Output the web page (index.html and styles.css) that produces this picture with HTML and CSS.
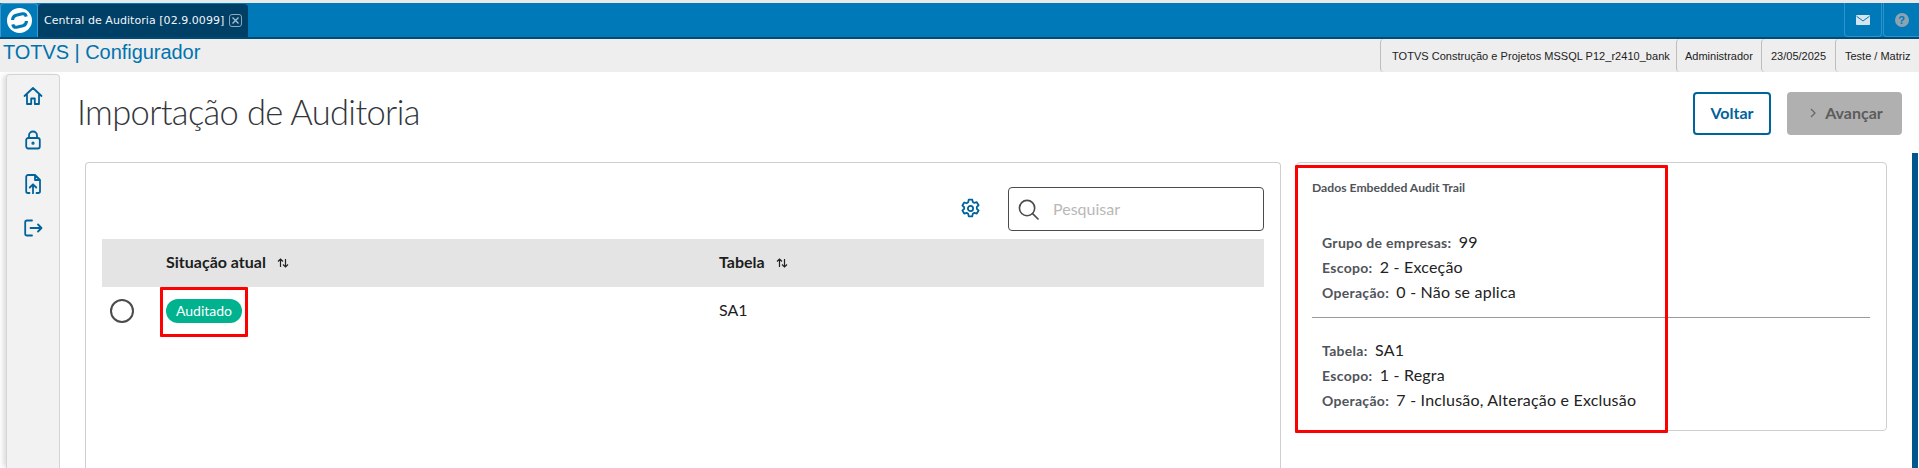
FILE: index.html
```html
<!DOCTYPE html>
<html lang="pt-BR">
<head>
<meta charset="utf-8">
<title>Central de Auditoria</title>
<link rel="stylesheet" href="styles.css">
</head>
<body>
<header class="topbar">
  <div class="logo-box">
    <svg class="logo" viewBox="0 0 26 26"><circle cx="13" cy="13" r="13" fill="#fff"/><path d="M5.800 12.500Q5.800 8.500 9.500 7.500L16 6Q19.300 5.500 20 9M20.200 13.500Q20.200 17.500 16.500 18.500L10 20Q6.700 20.500 6 17" fill="none" stroke="#0079b8" stroke-width="3.200"/></svg>
  </div>
  <div class="tab">
    <span>Central de Auditoria [02.9.0099]</span>
    <svg class="tab-close" viewBox="0 0 13 13"><rect x=".5" y=".5" width="12" height="12" rx="2.500" fill="none" stroke="#8fa9bb"/><path d="M3.500 3.500l6 6M9.500 3.500l-6 6" stroke="#a9bdcb" stroke-width="1.400"/></svg>
  </div>
  <div class="top-actions">
    <div class="top-btn top-mail"><svg viewBox="0 0 14 10" class="mail"><rect width="14" height="10" rx=".8" fill="#d5e5ef"/><path d="M.5 1.200L7 6l6.500-4.800" fill="none" stroke="#0079b8" stroke-width="1"/></svg></div>
    <div class="top-btn top-help"><span>?</span></div>
  </div>
</header>
<div class="infobar">
  <div class="brand">TOTVS | Configurador</div>
  <div class="info-cells">
    <div class="cell cell-a">TOTVS Construção e Projetos MSSQL P12_r2410_bank</div>
    <div class="cell cell-b">Administrador</div>
    <div class="cell cell-c">23/05/2025</div>
    <div class="cell cell-d">Teste / Matriz</div>
  </div>
</div>
<div class="app">
  <nav class="side">
    <svg class="nav-ico" viewBox="0 0 20 20"><path d="M1.500 10L10 2l8.500 8M4 8.500V18h4.200v-5.500h3.600V18H16V8.500" /></svg>
    <svg class="nav-ico" viewBox="0 0 20 20"><rect x="3.200" y="8" width="13.600" height="10.500" rx="2"/><path d="M6 8V5.500a4 4 0 0 1 8 0V8"/><circle cx="10" cy="13.200" r=".7"/></svg>
    <svg class="nav-ico" viewBox="0 0 20 20"><path d="M6.500 19H5a1.800 1.800 0 0 1-1.800-1.800V2.800A1.800 1.800 0 0 1 5 1h7l5 5v11.200a1.800 1.800 0 0 1-1.800 1.800h-1.700M12 1v5h5M10 19.500v-9M6.800 13.500L10 10.300l3.200 3.200"/></svg>
    <svg class="nav-ico" viewBox="0 0 20 20"><path d="M9 2.500H4a1.800 1.800 0 0 0-1.800 1.800v11.400A1.800 1.800 0 0 0 4 17.500h5M7.500 10h11M15 6.500l3.500 3.500-3.500 3.500"/></svg>
  </nav>
  <main class="content">
    <div class="page-head">
      <h1>Importação de Auditoria</h1>
      <div class="actions">
        <button class="btn btn-back">Voltar</button>
        <button class="btn btn-next"><svg class="chev" viewBox="0 0 6 10"><path d="M1 1l4 4-4 4"/></svg>Avançar</button>
      </div>
    </div>
    <div class="columns">
      <section class="panel panel-table">
        <div class="tools">
          <svg class="gear" viewBox="0 0 20 20"><path d="M8.300 1.500h3.400l.5 2.300 1.500.9 2.300-.7 1.700 2.900-1.700 1.600v1.800l1.700 1.600-1.700 2.900-2.300-.7-1.500.9-.5 2.500H8.300l-.5-2.500-1.500-.9-2.300.7-1.700-2.900 1.700-1.600V8.800L2.300 7.200 4 4.300l2.300.7 1.500-.9z"/><circle cx="10" cy="9.900" r="2.500"/></svg>
          <div class="search">
            <svg class="lens" viewBox="0 0 22 22"><circle cx="9.500" cy="9.500" r="8"/><path d="M15.300 15.300L21 21"/></svg>
            <span>Pesquisar</span>
          </div>
        </div>
        <div class="row row-head">
          <div class="c-check"></div>
          <div class="c-status">Situação atual <svg class="sort" viewBox="0 0 12 10"><path d="M3.500 9V1M1 3.500L3.500 1 6 3.500M8.500 1v8M6 6.500L8.500 9 11 6.500"/></svg></div>
          <div class="c-table">Tabela <svg class="sort" viewBox="0 0 12 10"><path d="M3.500 9V1M1 3.500L3.500 1 6 3.500M8.500 1v8M6 6.500L8.500 9 11 6.500"/></svg></div>
        </div>
        <div class="row row-body">
          <div class="c-check"><span class="radio"></span></div>
          <div class="c-status"><span class="badge">Auditado</span></div>
          <div class="c-table">SA1</div>
        </div>
        <div class="mark mark-badge"></div>
      </section>
      <section class="panel panel-data">
        <h2>Dados Embedded Audit Trail</h2>
        <div class="group group-first">
          <p><b>Grupo de empresas:</b> 99</p>
          <p><b>Escopo:</b> 2 - Exceção</p>
          <p><b>Operação:</b> 0 - Não se aplica</p>
        </div>
        <hr>
        <div class="group">
          <p><b>Tabela:</b> SA1</p>
          <p><b>Escopo:</b> 1 - Regra</p>
          <p><b>Operação:</b> 7 - Inclusão, Alteração e Exclusão</p>
        </div>
        <div class="mark mark-data"></div>
      </section>
    </div>
  </main>
</div>
<div class="scroll-thumb"></div>
</body>
</html>
```
FILE: styles.css
```css
* { box-sizing: border-box; }
html, body { margin: 0; height: 468px; overflow: hidden; background: #fff; }
body { font-family: "Lato", "Noto Sans", sans-serif; color: #1d1d1f; position: relative; }

.topbar { height: 39px; margin-top: 0; border-top: 3px solid #e9e9e9; border-bottom: 2px solid #024a76; background: #0079b8; display: flex; align-items: flex-end; }
.logo-box { width: 38px; height: 34px; border: 1px solid #3a9ad0; border-bottom: 0; border-radius: 4px 4px 0 0; display: flex; align-items: center; justify-content: center; }
.logo { width: 25px; height: 25px; }
.tab { width: 210px; height: 33px; background: #003f66; border-radius: 4px 4px 0 0; display: flex; align-items: center; padding-left: 6px; gap: 5px; color: #f2f6f9; font: 11px/1 "DejaVu Sans", sans-serif; letter-spacing: .05px; white-space: nowrap; }
.tab-close { width: 13px; height: 13px; flex: none; }
.top-actions { margin-left: auto; display: flex; height: 34px; }
.top-btn { height: 34px; border: 1px solid #2e93cc; border-top: 0; display: flex; align-items: center; justify-content: center; }
.top-mail { width: 38px; border-radius: 0 0 4px 4px; }
.top-help { width: 36px; margin-left: 1px; border-right: 0; border-radius: 0 0 0 4px; }
.mail { width: 14px; height: 10px; }
.top-help span { width: 14px; height: 14px; border-radius: 50%; background: #8ca3b1; color: #0079b8; font: bold 11px/14px "Liberation Sans", sans-serif; text-align: center; }

.infobar { height: 33px; background: #eee; display: flex; justify-content: space-between; }
.brand { font: 20px/26px "Liberation Sans", sans-serif; color: #0073ae; padding-left: 3px; letter-spacing: -.05px; }
.info-cells { display: flex; }
.cell { height: 33px; border-left: 1px solid #bdbdbd; border-radius: 4px 0 0 4px; font: 11px/34px "Liberation Sans", sans-serif; color: #222; padding-left: 9px; white-space: nowrap; }
.cell-a { width: 296px; padding-left: 11px; letter-spacing: .03px; }
.cell-b { width: 85px; padding-left: 8px; }
.cell-c { width: 74px; }
.cell-d { width: 84px; }

.app { display: flex; height: 396px; overflow: hidden; }
.side { width: 54px; margin: 2px 0 0 6px; background: #f2f2f2; border: 1px solid #d4d4d4; border-bottom: 0; border-radius: 4px 4px 0 0; box-shadow: -4px 0 5px -1px #ddd; display: flex; flex-direction: column; align-items: center; padding-top: 11px; gap: 24px; flex: none; }
.nav-ico { width: 20px; height: 20px; fill: none; stroke: #00639c; stroke-width: 1.800; stroke-linejoin: round; stroke-linecap: round; flex: none; }

.content { flex: 1; min-width: 0; padding: 0 17px 0 17px; }
.page-head { height: 90px; display: flex; justify-content: space-between; align-items: flex-start; padding-top: 18px; padding-right: 0; }
h1 { margin: 0; font-weight: 300; font-size: 34.500px; line-height: 44px; letter-spacing: -.65px; color: #33363b; }
.actions { display: flex; gap: 16px; margin-top: 2px; }
.btn { height: 43px; border-radius: 4px; font: bold 16px/1 "Lato", sans-serif; display: flex; align-items: center; justify-content: center; padding: 0 0 2px; }
.btn-back { width: 78px; background: #fff; border: 2px solid #00639c; color: #00639c; }
.btn-next { width: 115px; background: #b0b0b0; border: 0; color: #5c5c5c; gap: 9px; padding-left: 4px; }
.chev { width: 6px; height: 10px; fill: none; stroke: #666; stroke-width: 1.200; }

.columns { display: flex; gap: 15px; padding-left: 8px; padding-right: 14px; }
.panel { border: 1px solid #cfcfcf; border-radius: 4px; position: relative; }
.panel-table { width: 1196px; height: 306px; padding: 24px 16px 0; border-bottom: 0; border-radius: 4px 4px 0 0; }
.panel-data { width: 591px; height: 269px; padding: 16px 16px 0 15px; }
.tools { height: 52px; display: flex; justify-content: flex-end; align-items: flex-start; }
.gear { width: 21px; height: 21px; margin: 11px 27px 0 0; fill: none; stroke: #00639c; stroke-width: 1.700; stroke-linejoin: round; }
.search { width: 256px; height: 44px; border: 1px solid #4b4b4b; border-radius: 4px; display: flex; align-items: center; padding: 0 0 2px 9px; gap: 14px; font-size: 16px; color: #b8b8b8; }
.lens { width: 21px; height: 21px; fill: none; stroke: #4b4b4b; stroke-width: 1.700; stroke-linecap: round; margin-top: 2px; }
.row { display: flex; align-items: center; font-size: 16px; }
.row-head { height: 48px; background: #e4e4e4; font-weight: 700; color: #1d1d20; padding-bottom: 4px; }
.row-body { height: 48px; }
.c-check { width: 64px; padding-left: 8px; display: flex; }
.c-status { width: 553px; }
.row-body .c-table { padding-bottom: 4px; }
.sort { width: 12px; height: 10px; margin-left: 7px; fill: none; stroke: #222; stroke-width: 1.200; }
.radio { width: 24px; height: 24px; border: 2px solid #4b4b4b; border-radius: 50%; }
.badge { display: inline-block; width: 76px; height: 24px; border-radius: 12px; background: #00b28e; color: #fff; font-size: 14px; line-height: 24px; text-align: center; }
.mark { position: absolute; border: 3px solid #fe0000; border-radius: 1px; pointer-events: none; }
.mark-badge { left: 74px; top: 124px; width: 88px; height: 50px; }
.mark-data { left: -2px; top: 2px; width: 373px; height: 268px; }

h2 { margin: 0; font-size: 12.200px; line-height: 18px; font-weight: 700; color: #50545a; }
.group { padding-left: 10px; }
.group-first { padding-top: 32px; }
.group p { margin: 0; height: 25px; font-size: 16px; line-height: 25px; letter-spacing: .2px; white-space: pre-wrap; color: #222; }
.group b { font-size: 14px; font-weight: 700; letter-spacing: .3px; color: #50545a; margin-right: 3px; }
hr { margin: 13px 0 19px; border: 0; border-top: 1px solid #9a9a9a; }

.scroll-thumb { position: absolute; right: 1px; top: 153px; width: 6px; height: 315px; background: #00578c; }
```
